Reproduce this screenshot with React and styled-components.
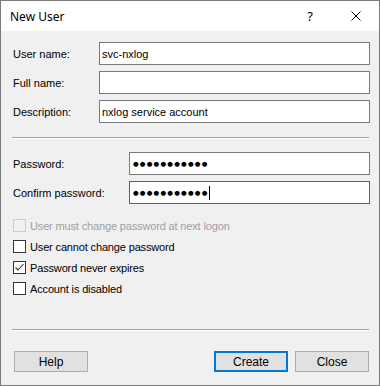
import React from "react";
import styled, { createGlobalStyle } from "styled-components";

const GlobalStyle = createGlobalStyle`
  html, body {
    margin: 0;
    padding: 0;
    background: #ffffff;
  }
  * {
    box-sizing: border-box;
  }
`;

const fields = [
  { label: "User name:", value: "svc-nxlog" },
  { label: "Full name:", value: "" },
  { label: "Description:", value: "nxlog service account" },
];

const options = [
  { label: "User must change password at next logon", checked: false, disabled: true },
  { label: "User cannot change password", checked: false },
  { label: "Password never expires", checked: true },
  { label: "Account is disabled", checked: false },
];

export default function App() {
  return (
    <>
      <GlobalStyle />
      <Window>
        <TitleBar>
          <Title>New User</Title>
          <Controls>
            <CaptionButton>?</CaptionButton>
            <CaptionButton>
              <svg width="10" height="10" viewBox="0 0 10 10">
                <path d="M0.5 0.5 L9.5 9.5 M9.5 0.5 L0.5 9.5" stroke="#000" strokeWidth="1" fill="none" />
              </svg>
            </CaptionButton>
          </Controls>
        </TitleBar>

        <Body>
          <FieldGroup>
            {fields.map((f) => (
              <FieldRow key={f.label} $labelWidth={87}>
                <Label>{f.label}</Label>
                <TextBox>{f.value}</TextBox>
              </FieldRow>
            ))}
          </FieldGroup>

          <Separator $top={14} $bottom={13} />

          <FieldGroup>
            <FieldRow $labelWidth={117}>
              <Label>Password:</Label>
              <TextBox>
                <Dots>●●●●●●●●●●●</Dots>
              </TextBox>
            </FieldRow>
            <FieldRow $labelWidth={117}>
              <Label>Confirm password:</Label>
              <TextBox $focused>
                <Dots>●●●●●●●●●●●</Dots>
                <Caret />
              </TextBox>
            </FieldRow>
          </FieldGroup>

          <OptionList>
            {options.map((o) => (
              <OptionRow key={o.label} $disabled={o.disabled}>
                <Box $disabled={o.disabled}>
                  {o.checked && (
                    <svg width="11" height="11" viewBox="0 0 11 11">
                      <path d="M1.5 5.5 L4 8 L9.5 2" stroke="#333" strokeWidth="1.1" fill="none" />
                    </svg>
                  )}
                </Box>
                {o.label}
              </OptionRow>
            ))}
          </OptionList>

          <Separator $top={30} $bottom={20} />

          <ButtonRow>
            <Button>Help</Button>
            <Spacer />
            <Button $default>Create</Button>
            <Button>Close</Button>
          </ButtonRow>
        </Body>
      </Window>
    </>
  );
}

const Window = styled.div`
  width: 380px;
  height: 386px;
  border: 1px solid #7a7a7a;
  background: #f0f0f0;
  display: flex;
  flex-direction: column;
  font-family: "Liberation Sans", Arial, sans-serif;
  font-size: 11px;
  color: #000;
`;

const TitleBar = styled.div`
  height: 30px;
  background: #ffffff;
  display: flex;
  align-items: center;
  justify-content: space-between;
  padding-left: 9px;
`;

const Title = styled.div`
  font-family: "Noto Sans", "Open Sans", sans-serif;
  font-size: 12px;
  color: #000;
`;

const Controls = styled.div`
  display: flex;
  height: 100%;
`;

const CaptionButton = styled.div`
  width: 46px;
  height: 100%;
  display: flex;
  align-items: center;
  justify-content: center;
  font-family: "Noto Sans", sans-serif;
  font-size: 13px;
`;

const Body = styled.div`
  flex: 1;
  display: flex;
  flex-direction: column;
  padding: 11px 9px 0 11px;
`;

const FieldGroup = styled.div`
  display: flex;
  flex-direction: column;
  gap: 6px;
`;

const FieldRow = styled.div`
  display: grid;
  grid-template-columns: ${(p) => p.$labelWidth}px 1fr;
  align-items: center;
  height: 23px;
`;

const Label = styled.div`
  padding-left: 1px;
  white-space: nowrap;
`;

const TextBox = styled.div`
  height: 23px;
  background: #ffffff;
  border: 1px solid ${(p) => (p.$focused ? "#0078d7" : "#7a7a7a")};
  display: flex;
  align-items: center;
  padding-left: 2px;
  white-space: nowrap;
  overflow: hidden;
`;

const Dots = styled.span`
  font-family: "DejaVu Sans", sans-serif;
  font-size: 6.5px;
  letter-spacing: 1.2px;
  padding-left: 1px;
`;

const Caret = styled.span`
  display: inline-block;
  width: 1px;
  height: 14px;
  background: #000;
`;

const Separator = styled.div`
  height: 2px;
  border-top: 1px solid #a0a0a0;
  border-bottom: 1px solid #ffffff;
  margin: ${(p) => p.$top}px 1px ${(p) => p.$bottom}px 0;
`;

const OptionList = styled.div`
  margin-top: 11px;
  display: flex;
  flex-direction: column;
`;

const OptionRow = styled.div`
  height: 21px;
  display: flex;
  align-items: center;
  gap: 4px;
  padding-left: 1px;
  letter-spacing: -0.15px;
  color: ${(p) => (p.$disabled ? "#a0a0a0" : "#000")};
  white-space: nowrap;
`;

const Box = styled.div`
  width: 13px;
  height: 13px;
  border: 1px solid ${(p) => (p.$disabled ? "#cccccc" : "#333333")};
  background: ${(p) => (p.$disabled ? "#f0f0f0" : "#ffffff")};
  display: flex;
  align-items: center;
  justify-content: center;
`;

const ButtonRow = styled.div`
  display: flex;
  gap: 7px;
  padding: 0 1px 0 2px;
`;

const Spacer = styled.div`
  flex: 1;
`;

const Button = styled.div`
  width: 74px;
  height: 21px;
  background: #e1e1e1;
  border: ${(p) => (p.$default ? "2px solid #0078d7" : "1px solid #adadad")};
  display: flex;
  align-items: center;
  justify-content: center;
  font-size: 12px;
`;
